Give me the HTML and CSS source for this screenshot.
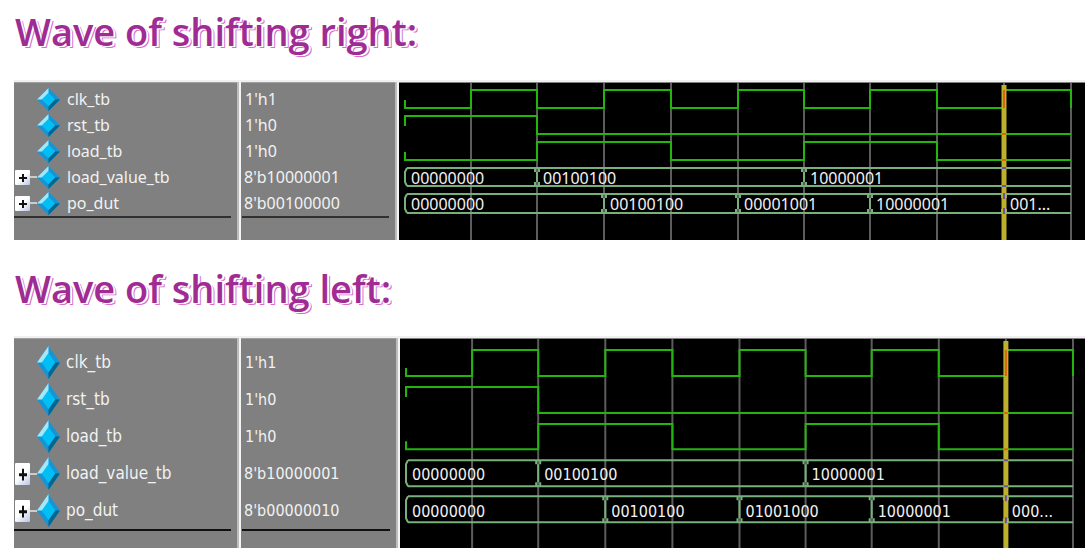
FILE: index.html
```
<!DOCTYPE html>
<html lang="en"><head><meta charset="utf-8"><title>Shift register waves</title><link rel="stylesheet" href="styles.css"></head>
<body><main id="page"></main>
<script src="waves.js"></script></body></html>
```
FILE: styles.css
```
body { margin: 0; background: #fff; font-family: "Noto Sans", sans-serif; }
main { padding: 8px 7px 12px 14px; }
h1 { margin: 0 1px; font: 600 38px/46px "Open Sans", sans-serif; color: #a02b93;
  text-shadow: 1px 1px 0 #fff, 2px 1px 0 #fff, 3px 2px 0 #d86dcb; }
.viewer { display: grid; grid-template-columns: 223px 154px 1fr; column-gap: 4px; margin-top: 26px;
  background: #f4f4f4; border-top: 2px solid #f0f0f0; color: #f2f2f2; font-size: 16px; }
.names, .values { background: #808080; border-top: 1px solid #a0a0a0; box-shadow: 2px 0 0 #bdbdbd; padding-top: 3px; padding-bottom: 22px; }
.viewer ul { list-style: none; margin: 0; padding-left: 0; }
.viewer li { height: 26px; display: flex; align-items: center; white-space: nowrap; }
.names li { padding-left: 1px; }
.toggle { width: 15px; height: 15px; padding: 0; border: 0; background: linear-gradient(135deg, #fff 50%, #b8c4e8); border-radius: 1px; display: block; }
.toggle svg, .gem { display: block; }
.blank { width: 15px; }
.link { width: 7px; height: 2px; }
.has-link { background: #ccc; }
.gem { width: 23px; height: 23px; margin-right: 7px; }
.values li { padding-left: 3px; }
.values .bus { padding-left: 2px; }
.names ul, .values ul { border-bottom: 2px solid #303030; margin-right: 6px; }
.values ul { margin-left: 1px; }
.wave { display: grid; background: #000; border-top: 1px solid #808080; min-width: 0; }
.plot { grid-area: 1 / 1; width: 100%; height: 100%; display: block; }
.labels { grid-area: 1 / 1; padding-top: 82px; }
.row { height: 26px; line-height: 26px; display: flex; white-space: nowrap; }
.viewer + h1 { margin-top: 25px; }
.tall { grid-template-columns: 223px 155px 1fr; margin-top: 25px; font-family: "DejaVu Sans Condensed", "Noto Sans", sans-serif; }
.tall li, .tall .row { height: 37px; line-height: 37px; }
.tall .names, .tall .values { padding-top: 5px; padding-bottom: 17px; }
.tall .names { font-size: 17px; }
.tall .gem { height: 33px; margin-right: 6px; }
.tall .toggle, .tall .toggle svg { height: 22px; }
.tall .names ul, .tall .values ul { border-color: #101010; }
.tall .labels { padding-top: 117px; }
```
FILE: waves.js
```
const X = [6, 72, 138, 205, 272, 339, 405, 471, 538, 605, 672];
const names = ["clk_tb", "rst_tb", "load_tb", "load_value_tb", "po_dut"];
const gem = `<svg class="gem" viewBox="0 0 24 24" preserveAspectRatio="none" aria-hidden="true"><path d="M12 0 24 12 12 24 0 12Z" fill="#1695d5"/><path d="M12 0V6L6 12H0Z" fill="#a4e8f8"/><path d="M12 24V18L18 12H24Z" fill="#006591"/><path d="M12 5 19 12 12 19 5 12Z" fill="#00bff5"/></svg>`;
const plus = n => `<button class="toggle" aria-label="Expand ${n}"><svg width="15" height="15" viewBox="0 0 15 15" preserveAspectRatio="none"><path d="M4 8H12M8 4V12" stroke="#111" stroke-width="2"/></svg></button>`;

function busPath(top, bottom, edges) {
  let d = `M8 ${top}H672M8 ${bottom}H672M8 ${top}L6 ${top + 4}V${bottom - 4}L8 ${bottom}`;
  edges.forEach(i => {
    const x = X[i];
    d += `M${x - 2} ${top}V${top + 4}M${x + 2} ${top}V${top + 4}M${x - 2} ${bottom}V${bottom - 4}M${x + 2} ${bottom}V${bottom - 4}M${x} ${top + 4}V${bottom - 4}`;
  });
  return d;
}

function plot(s) {
  const [ch, cl, rh, rl, lh, ll, b1, b2, p1, p2] = s.y;
  let clk = `M6 ${cl - 8}V${cl}`;
  for (let i = 1; i < 11; i++) clk += `H${X[i]}V${i % 2 ? ch : cl}`;
  const rst = `M6 ${rh + 10}V${rh}H138V${rl}H672`;
  const load = `M6 ${ll - 8}V${ll}H138V${lh}H272V${ll}H405V${lh}H538V${ll}H672`;
  return `<svg class="plot" viewBox="0 0 ${s.w} ${s.h}" preserveAspectRatio="none" fill="none" role="img" aria-label="Waveform">
  <path d="${X.slice(1).map(x => `M${x} 0V${s.h}`).join("")}" stroke="#5c5c5c" stroke-width="2"/>
  <path d="${clk}${rst}${load}" stroke="#22b50c" stroke-width="2"/>
  <path d="${busPath(b1, b2, [2, 6])}${busPath(p1, p2, [3, 5, 7, 9])}" stroke="#78b07c" stroke-width="2"/>
  <path d="M605 2V${s.h}" stroke="#bdb02c" stroke-width="5"/>
  <path d="M605 ${ch}V${cl}M603 ${rl}H607M603 ${ll}H607" stroke="#e06410" stroke-width="2"/>
  <path d="M603 ${b1}H607M603 ${b2}H607M605 ${p1 - 1}V${p1 + 5}M605 ${p2 - 5}V${p2 + 1}" stroke="#6a52a8" stroke-width="2"/></svg>`;
}

function row(items, w) {
  let html = `<span style="width:${100 * 12 / w}%"></span>`;
  items.forEach(([i, t], k) => {
    const end = k + 1 < items.length ? X[items[k + 1][0]] : w - 6;
    html += `<span style="width:${100 * (end - X[i]) / w}%">${t}</span>`;
  });
  return `<div class="row">${html}</div>`;
}

function viewer(s) {
  return `<h1>${s.title}</h1><section class="viewer ${s.cls}">
  <div class="names"><ul>${names.map((n, i) => `<li>${i > 2 ? plus(n) : '<span class="blank"></span>'}<span class="link${i > 2 ? " has-link" : ""}"></span>${gem}${n}</li>`).join("")}</ul></div>
  <div class="values"><ul>${s.values.map((v, i) => `<li class="${i > 2 ? "bus" : ""}">${v}</li>`).join("")}</ul></div>
  <div class="wave">${plot(s)}<div class="labels">${row([[0, "00000000"], [2, "00100100"], [6, "10000001"]], s.w)}${row(s.out, s.w)}</div></div></section>`;
}

document.getElementById("page").innerHTML = [
  { title: "Wave of shifting right:", cls: "", w: 686, h: 157, y: [7, 25, 33, 51, 59, 77, 85, 103, 111, 130],
    values: ["1'h1", "1'h0", "1'h0", "8'b10000001", "8'b00100000"],
    out: [[0, "00000000"], [3, "00100100"], [5, "00001001"], [7, "10000001"], [9, "001..."]] },
  { title: "Wave of shifting left:", cls: "tall", w: 684, h: 209, y: [11, 37, 48, 74, 85, 110, 121, 147, 157, 183],
    values: ["1'h1", "1'h0", "1'h0", "8'b10000001", "8'b00000010"],
    out: [[0, "00000000"], [3, "00100100"], [5, "01001000"], [7, "10000001"], [9, "000..."]] }
].map(viewer).join("");
```
